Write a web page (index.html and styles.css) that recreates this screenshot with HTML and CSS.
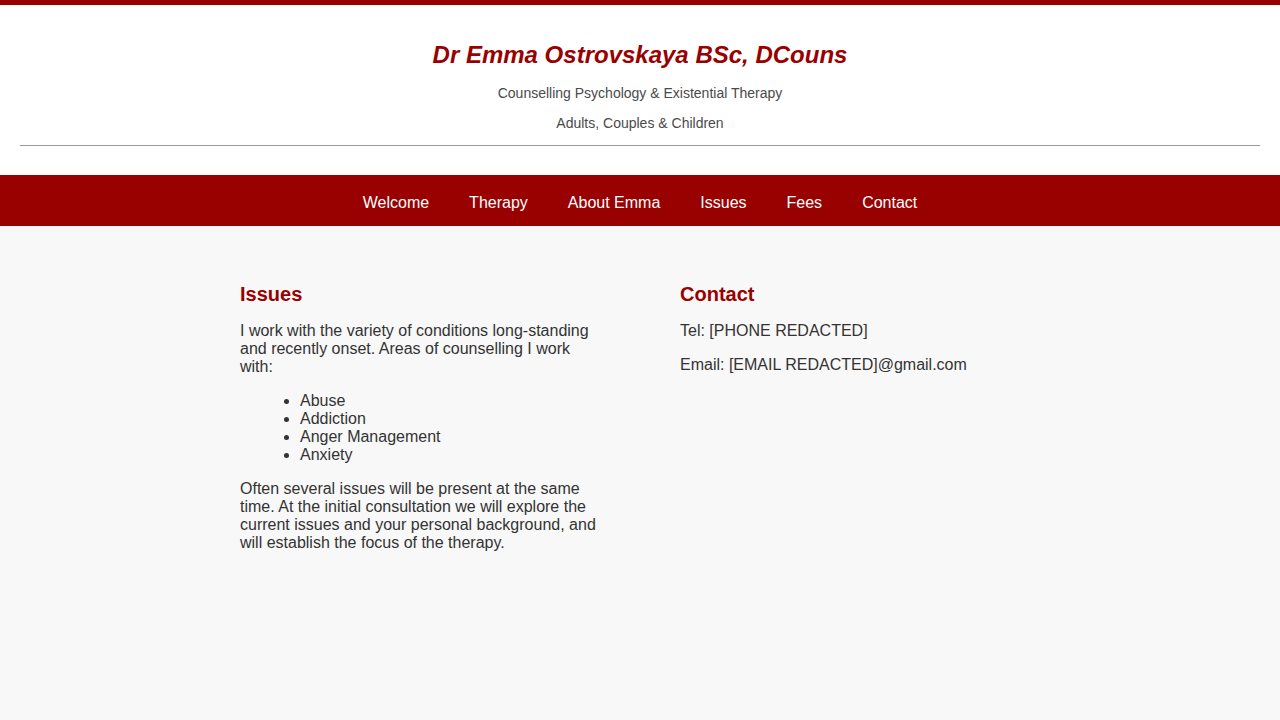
FILE: index.html
```html
<!DOCTYPE html>
<html lang="en">
<head>
<meta charset="utf-8">
<title>Dr Emma Ostrovskaya</title>
<link rel="stylesheet" href="styles.css">
</head>
<body>
<header class="site-header">
  <h1 class="title">Dr Emma Ostrovskaya BSc, DCouns</h1>
  <p class="subtitle">Counselling Psychology &amp; Existential Therapy</p>
  <p class="subtitle">Adults, Couples &amp; Children</p>
  <hr class="rule">
</header>
<nav class="nav">
  <a href="#">Welcome</a>
  <a href="#">Therapy</a>
  <a href="#">About Emma</a>
  <a href="#">Issues</a>
  <a href="#">Fees</a>
  <a href="#">Contact</a>
</nav>
<main class="content">
  <section class="col">
    <h2 class="heading">Issues</h2>
    <p>I work with the variety of conditions long-standing and recently onset. Areas of counselling I work with:</p>
    <ul class="list">
      <li>Abuse</li>
      <li>Addiction</li>
      <li>Anger Management</li>
      <li>Anxiety</li>
    </ul>
    <p>Often several issues will be present at the same time. At the initial consultation we will explore the current issues and your personal background, and will establish the focus of the therapy.</p>
  </section>
  <section class="col">
    <h2 class="heading">Contact</h2>
    <p>Tel: [PHONE REDACTED]</p>
    <p>Email: [EMAIL REDACTED]@gmail.com</p>
  </section>
</main>
</body>
</html>
```
FILE: styles.css
```css
html, body {
  margin: 0;
  padding: 0;
}
body {
  background: #f8f8f8;
  font-family: "Liberation Sans", Arial, sans-serif;
  color: #333;
  border-top: 5px solid #990000;
  min-height: 715px;
}
.site-header {
  background: #fff;
  padding: 36px 20px 29px;
  text-align: center;
}
.title {
  margin: 0;
  font-size: 24px;
  line-height: 28px;
  font-weight: bold;
  font-style: italic;
  color: #990000;
}
.subtitle {
  margin: 16px 0 0;
  font-size: 14px;
  line-height: 16px;
  color: #4a4a4a;
}
.subtitle + .subtitle {
  margin-top: 14px;
}
.rule {
  margin: 14px 0 0;
  border: 0;
  border-top: 1px solid #999;
  height: 0;
}
.nav {
  background: #990000;
  padding: 19px 0 14px;
  display: flex;
  justify-content: center;
  align-items: flex-start;
  gap: 40px;
}
.nav a {
  color: #fff;
  text-decoration: none;
  font-size: 16px;
  line-height: 18px;
}
.content {
  display: flex;
  justify-content: center;
  gap: 80px;
  padding-top: 57px;
}
.col {
  width: 360px;
}
.heading {
  margin: 0;
  font-size: 20px;
  line-height: 23px;
  color: #990000;
  font-weight: bold;
}
.col p {
  margin: 16px 0;
  font-size: 16px;
  line-height: 18px;
}
.list {
  margin: 16px 0;
  padding-left: 60px;
  font-size: 16px;
  line-height: 18px;
}
```
